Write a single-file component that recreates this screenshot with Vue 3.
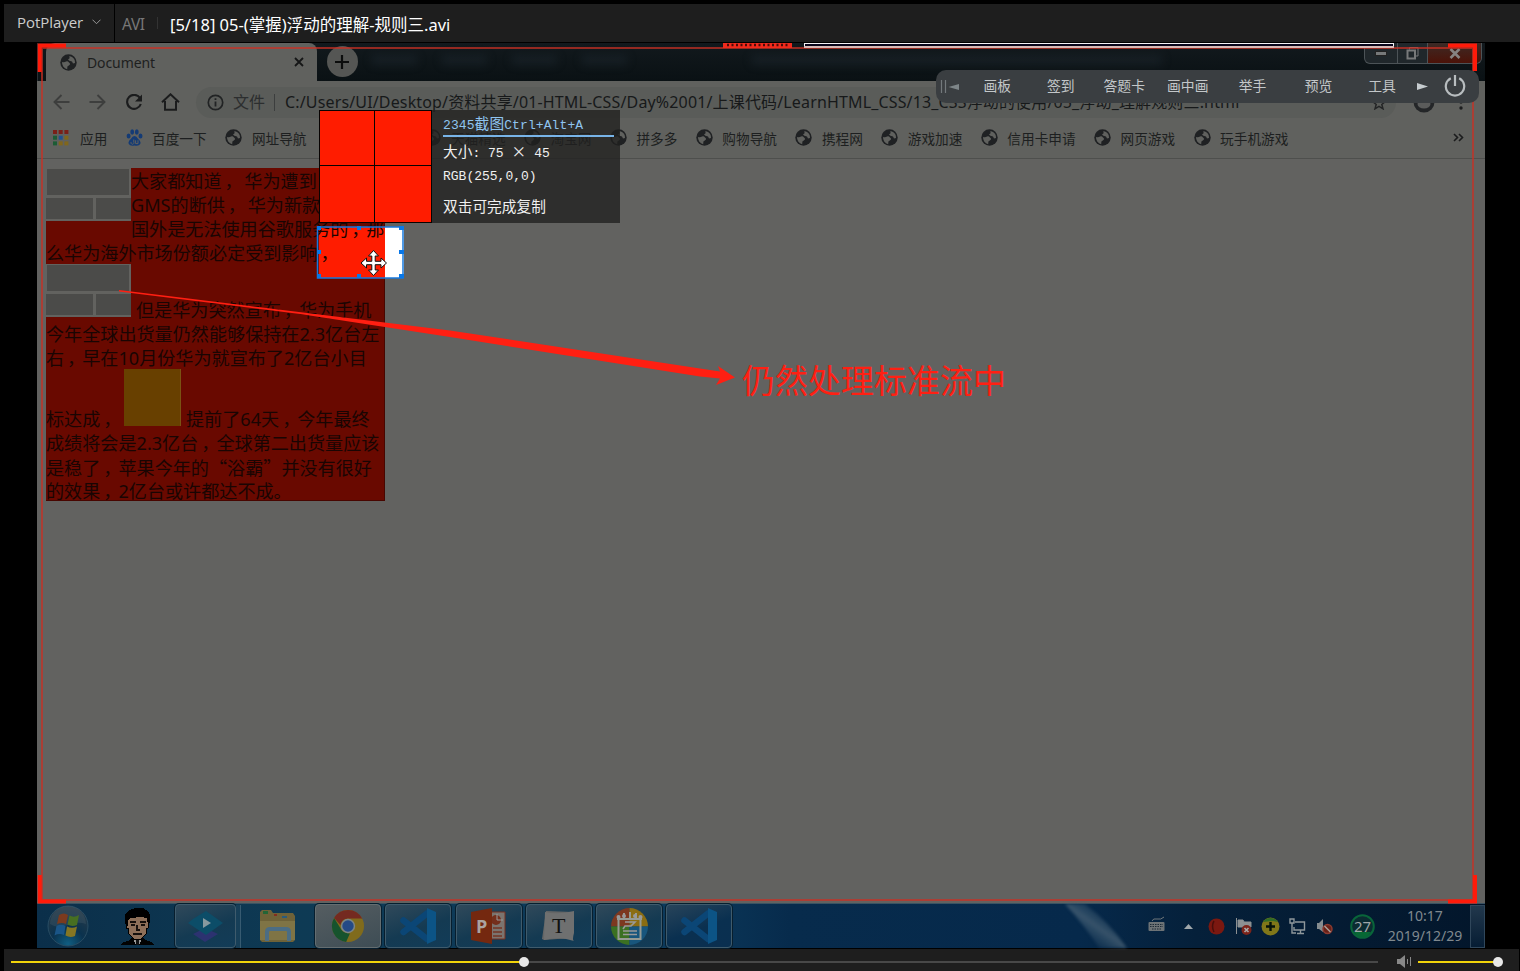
<script setup>
const bookmarks = [
  { t: '网址导航' }, { t: '', n: 4 }, { t: '天猫精选' }, { t: '淘宝网' }, { t: '拼多多' }, { t: '购物导航' },
  { t: '携程网' }, { t: '游戏加速' }, { t: '信用卡申请' }, { t: '网页游戏' }, { t: '玩手机游戏' }
]
const itemWidth = (b) => ({ width: 44.96 + (b.n || b.t.length) * 13.65 + 'px' })
const tools = ['画板', '签到', '答题卡', '画中画', '举手', '预览', '工具']
const dots = ['#7a2018', '#7a2018', '#7a2018', '#1c5c35', '#22508c', '#80661c', '#1c5c35', '#80661c', '#80661c']
const split = (s) => s.split(/([，“”])/)
const kind = (s) => ({ c: s === '，', q: s === '“' || s === '”' })
const top = ['大家都知道， 华为遭到', 'GMS的断供， 华为新款', '国外是无法使用谷歌服务的，那']
const mid = ['今年全球出货量仍然能够保持在2.3亿台左', '右，早在10月份华为就宣布了2亿台小目']
const end = ['成绩将会是2.3亿台，全球第二出货量应该', '是稳了，苹果今年的“浴霸”并没有很好', '的效果，2亿台或许都达不成。']
</script>

<template>
  <div class="app">
    <svg width="0" height="0" class="defs">
      <symbol id="globe" viewBox="0 0 17 17">
        <circle cx="8.5" cy="8.5" r="8.2" fill="#1f2123" />
        <path d="M2 8Q4.500 8.600 6 7.600T9 8.400Q10.600 9.200 9.800 10.800L7.400 12.600L7.200 15.200Q4.800 14.600 3.200 12.400Q1.900 10.400 2 8Z" fill="#60615e" />
        <path d="M9.400 2Q12.400 2.400 14 4.800Q15.200 6.600 15 9L13 9.600L12 7.600L9.400 6.800L8 5.400L9.600 4.200Z" fill="#60615e" />
      </symbol>
      <symbol id="code" viewBox="0 0 36 36">
        <path d="M3.500 12.500L27 31M3.500 24L27 5.500" stroke="#0b4676" stroke-width="6.500" stroke-linecap="round" />
        <path d="M27 0L36 4V32L27 36Z" fill="#0c5486" />
      </symbol>
    </svg>

    <header class="title">
      <div class="brand"><span>PotPlayer</span>
        <svg width="9" height="6" viewBox="0 0 9 6"><path d="M.5 .7L4.5 4.7L8.5 .7" fill="none" stroke="#999" /></svg>
      </div>
      <span class="fmt">AVI</span><i class="sep"></i>
      <span class="file">[5/18] 05-(掌握)浮动的理解-规则三.avi</span>
    </header>

    <main class="video">
      <div class="tabs">
        <div class="tab">
          <svg width="17" height="17"><use href="#globe" /></svg>
          <span>Document</span>
          <svg width="10" height="10" class="x"><path d="M1 1L9 9M9 1L1 9" stroke="#151617" stroke-width="1.8" /></svg>
        </div>
        <div class="plus"><svg width="14" height="14"><path d="M7 0V14M0 7H14" stroke="#0c0d0d" stroke-width="2.2" /></svg></div>
        <div class="ghosts"><i></i><i></i><i></i><i></i><i class="wide"></i></div>
        <div class="win">
          <div><svg width="12" height="5"><rect x=".5" y=".5" width="11" height="4" fill="#77797a" stroke="#222" /></svg></div>
          <div><svg width="13" height="13"><path d="M3.5 2.5V.5H12V9H10" fill="none" stroke="#77797a" /><rect x="1.5" y="3.5" width="7.5" height="8" fill="none" stroke="#77797a" stroke-width="2" /></svg></div>
          <div class="close"><svg width="12" height="11"><path d="M1.5 1L10.5 10M10.5 1L1.5 10" stroke="#858281" stroke-width="2.6" /></svg></div>
        </div>
      </div>

      <div class="bar">
        <svg width="17" height="16" viewBox="0 0 17 16"><path d="M16.5 8H1.5M8.5 1L1.5 8L8.5 15" fill="none" stroke="#3d3e3d" stroke-width="1.9" /></svg>
        <svg width="17" height="16" viewBox="0 0 17 16"><path d="M.5 8H15.5M8.5 1L15.5 8L8.5 15" fill="none" stroke="#3d3e3d" stroke-width="1.9" /></svg>
        <svg width="18" height="17" viewBox="0 0 18 17"><path d="M15 4A7 7 0 1 0 15.8 10" fill="none" stroke="#1b1c1d" stroke-width="2.1" /><path d="M17 .5V7.5H10Z" fill="#1b1c1d" /></svg>
        <svg width="19" height="18" viewBox="0 0 19 18"><path d="M1 9.3L9.5 1.3L18 9.3M4 8V16.8H15V8" fill="none" stroke="#1b1c1d" stroke-width="2" /></svg>
        <div class="pill">
          <svg width="17" height="17"><circle cx="8.5" cy="8.5" r="7.2" fill="none" stroke="#212324" stroke-width="1.7" /><path d="M8.5 7.5V12.5M8.5 4.3V6" stroke="#212324" stroke-width="1.8" /></svg>
          <span class="kind">文件</span><i></i>
          <span class="url">C:/Users/UI/Desktop/资料共享/01-HTML-CSS/Day%2001/上课代码/LearnHTML_CSS/13_CSS浮动的使用/05_浮动_理解规则三.html</span>
          <svg class="star" width="14" height="14" viewBox="0 0 14 14"><path d="M7 1L8.8 5.2L13.2 5.6L9.8 8.4L11 12.8L7 10.4L3 12.8L4.2 8.4L.8 5.6L5.2 5.2Z" fill="none" stroke="#242526" stroke-width="1.5" /></svg>
        </div>
        <svg class="user" width="22" height="22"><circle cx="11" cy="11" r="10.5" fill="#242628" /><ellipse cx="11" cy="13" rx="6.5" ry="4.5" fill="#5b5c5b" /></svg>
        <svg class="kebab" width="4" height="16"><circle cx="2" cy="2" r="1.7" fill="#1c1d1e" /><circle cx="2" cy="8" r="1.7" fill="#1c1d1e" /><circle cx="2" cy="14" r="1.7" fill="#1c1d1e" /></svg>
      </div>

      <div class="marks">
        <svg width="16" height="16" class="apps"><rect v-for="(c, i) in dots" :key="i" :x="(i % 3) * 5.7" :y="Math.floor(i / 3) * 5.7" width="4" height="4" :fill="c" /></svg>
        <span class="w-apps">应用</span>
        <svg width="17" height="17" viewBox="0 0 17 17" class="paw" fill="#143b75"><ellipse cx="2.6" cy="7" rx="2" ry="2.5" /><ellipse cx="6.2" cy="3" rx="1.9" ry="2.7" /><ellipse cx="10.8" cy="3" rx="1.9" ry="2.7" /><ellipse cx="14.5" cy="7" rx="2" ry="2.5" /><path d="M8.5 7Q10.6 7 12 9.8Q15.4 12.3 14.2 15Q12.8 17.4 8.5 16.4Q4.2 17.4 2.8 15Q1.6 12.3 5 9.8Q6.4 7 8.5 7Z" /><path d="M5.2 13a1.5 1.5 0 1 0 2.6 0V10.5M9.6 11.3V14.6H12V11.3" fill="none" stroke="#60615e" /></svg>
        <span class="w-baidu">百度一下</span>
        <div v-for="(b, i) in bookmarks" :key="i" class="mark" :style="itemWidth(b)">
          <svg v-if="b.t" width="17" height="17"><use href="#globe" /></svg><span>{{ b.t }}</span>
        </div>
        <svg class="more" width="11" height="9"><path d="M1 1L4.5 4.5L1 8M6 1L9.5 4.5L6 8" fill="none" stroke="#1b1c1d" stroke-width="1.6" /></svg>
      </div>

      <section class="page">
        <div class="picked"></div>
        <article class="para">
          <div class="float-row">
            <div class="brick"><b></b><div><b></b><b></b></div></div>
            <div><p v-for="l in top" :key="l"><span v-for="(s, i) in split(l)" :key="i" :class="kind(s)">{{ s }}</span></p></div>
          </div>
          <p>么华为海外市场份额必定受到影响<span class="c">，</span></p>
          <div class="inline-row">
            <div class="brick"><b></b><div><b></b><b></b></div></div>
            <p>但是华为突然宣布<span class="c">，</span>华为手机</p>
          </div>
          <p v-for="l in mid" :key="l"><span v-for="(s, i) in split(l)" :key="i" :class="kind(s)">{{ s }}</span></p>
          <div class="gold-row">
            <p>标达成<span class="c">，</span></p><i></i><p>提前了64天<span class="c">，</span>今年最终</p>
          </div>
          <p v-for="l in end" :key="l"><span v-for="(s, i) in split(l)" :key="i" :class="kind(s)">{{ s }}</span></p>
        </article>
      </section>

      <footer class="task">
        <svg class="orb" width="42" height="42" viewBox="0 0 42 42">
          <defs><radialGradient id="orbg" cx=".5" cy=".95" r=".9"><stop offset="0" stop-color="#11658a" /><stop offset=".45" stop-color="#0b334f" /><stop offset="1" stop-color="#2c3c48" /></radialGradient></defs>
          <circle cx="21" cy="21" r="20" fill="url(#orbg)" stroke="#2c5066" />
          <path d="M3 19A18 18 0 0 1 39 19Q30 16 21 20Q10 24 3 19Z" fill="#6d7f8a" opacity=".22" />
          <path d="M12 10Q17 7 21 10L19 19Q15 17 10 19Z" fill="#8b3c18" /><path d="M22.500 10.500Q27 13 32 10L30 20Q25 22 20.500 19.500Z" fill="#50781c" />
          <path d="M9.500 21Q14 18.500 18.500 21L17 30Q12 28 7.500 30.500Z" fill="#1d5b90" /><path d="M20 21.500Q25 24 30 21.500L28 31Q23 33 18.500 30.500Z" fill="#96801e" />
        </svg>
        <svg class="face" width="33" height="37" viewBox="0 0 33 37" shape-rendering="crispEdges">
          <path d="M0 36L3 34L9 32L12 28H21L24 32L30 34L33 36V37H0Z" fill="#020202" />
          <path d="M12 29H21L19 36H14Z" fill="#999" /><path d="M15 31H18V37H15Z" fill="#111" />
          <path d="M5 14L7 8H26L28 14L27 20H26L25 26L20 31H13L8 26L7 20H5Z" fill="#8e7059" stroke="#000" />
          <path d="M4 14V6L8 2L14 0H22L27 3L29 7V14L27 18L26 10L20 9L9 10L7 12V18H5Z" fill="#000" />
          <path d="M9 14H15M19 14H25M10 17H14M20 17H24M16 17V22H19M12 26H21" fill="none" stroke="#16100c" stroke-width="1.2" />
        </svg>
        <div class="btn player"><svg width="35" height="31" viewBox="0 0 35 31"><path d="M5 23L17 17L30 23L17 31Z" fill="#2c3270" /><path d="M18 0L35 12L18 24L0 12L5 8Z" fill="#0c4d68" /><path d="M15 7L23 12L15 17Z" fill="#87999f" /></svg></div>
        <i class="stack"></i>
        <svg class="folder" width="37" height="33" viewBox="0 0 37 33">
          <path d="M1 2L3 0H12L14 3H34L36 6V30L34 32H3L1 30Z" fill="#6e6238" /><path d="M4 1H9V4H4Z" fill="#236536" /><path d="M15 4H18V6H15Z" fill="#832d20" /><path d="M23 6H28V8H23Z" fill="#285b7c" />
          <path d="M1 11H36V30H1Z" fill="#7f7445" /><path d="M8 31V22Q8 19 11 19H27Q30 19 30 22V31" fill="none" stroke="#4b6d84" stroke-width="4" />
        </svg>
        <div class="btn lit"><svg width="34" height="34" viewBox="0 0 36 36"><circle cx="18" cy="18" r="17" fill="#806b1c" /><path d="M3.300 9.500L11 22Q14 26 20 26L16 35A17 17 0 0 1 3.300 9.500Z" fill="#16532d" /><path d="M3.300 9.500A17 17 0 0 1 33 10H18A8 8 0 0 0 10 17L3.300 9.500Z" fill="#742a20" /><circle cx="18" cy="18" r="7.600" fill="#7b8587" /><circle cx="18" cy="18" r="6" fill="#244a86" /></svg></div>
        <div class="btn"><svg width="36" height="36"><use href="#code" /></svg></div>
        <div class="btn"><svg width="36" height="36" viewBox="0 0 36 36"><path d="M18 4H34V31H18Z" fill="#7b746f" stroke="#793020" /><path d="M22 20H31M22 24H31M22 28H31" stroke="#743525" stroke-width="1.600" /><circle cx="25" cy="12" r="5" fill="#742f1c" /><path d="M26 6V12H32" fill="none" stroke="#999" /><path d="M0 4L21 0V36L0 32Z" fill="#74280f" /><text x="5" y="25" class="ppt">P</text></svg></div>
        <div class="btn"><svg width="34" height="34" viewBox="0 0 34 34"><path d="M4 2L31 3L29 29L2 31L0 30Z" fill="#656666" /><path d="M3 3Q16 6 32 2V24Q30 31 32 32Q18 27 2 31Z" fill="#6f7070" /><text x="10" y="24" class="tt">T</text></svg></div>
        <div class="btn"><svg width="37" height="37" viewBox="0 0 37 37"><path d="M18.500 18.500V0A18.500 18.500 0 0 0 0 18.500Z" fill="#7d3820" /><path d="M18.500 18.500H37A18.500 18.500 0 0 0 18.500 0Z" fill="#8b6d12" /><path d="M18.500 18.500H0A18.500 18.500 0 0 0 18.500 37Z" fill="#3b7022" /><path d="M18.500 18.500V37A18.500 18.500 0 0 0 37 18.500Z" fill="#18567d" /><path d="M7.500 9V31H29.500V9M6 11H31M13 5V11M19 4V11M25 5V11" fill="none" stroke="#969b94" stroke-width="2" /><circle cx="7.500" cy="9" r="2" fill="#999" /><circle cx="13" cy="8" r="2" fill="#999" /><circle cx="24" cy="8" r="2" fill="#999" /><circle cx="29.500" cy="9" r="2" fill="#999" /><path d="M14 14H24L20 18H14L12 21M12 23H26M12 26.500H26" fill="none" stroke="#999" stroke-width="1.600" /></svg></div>
        <div class="btn last"><svg width="36" height="36"><use href="#code" /></svg></div>
        <svg class="beam" width="70" height="44"><defs><linearGradient id="bg1" x1="0" y1="1" x2="1" y2="0"><stop offset=".2" stop-color="#365873" stop-opacity="0" /><stop offset=".5" stop-color="#4c6578" stop-opacity=".7" /><stop offset=".8" stop-color="#365873" stop-opacity="0" /></linearGradient></defs><path d="M0 0H20Q44 18 62 44H34Q20 22 0 0Z" fill="url(#bg1)" /></svg>
        <div class="tray">
          <svg class="t1" width="17" height="16"><path d="M4 5Q5 2 9 3T16 1" fill="none" stroke="#6f777b" /><rect x=".500" y="6" width="16" height="9" rx="1" fill="#6d7376" /><path d="M2 8.500H15M2 10.500H15M4 13H13" stroke="#1d2b36" stroke-dasharray="1.500 1" /></svg>
          <svg class="t2" width="9" height="5"><path d="M0 5L4.500 0L9 5Z" fill="#a0a7aa" /></svg>
          <svg class="t3" width="17" height="17"><circle cx="8.500" cy="8.500" r="8" fill="#7b1810" /><path d="M6 3Q3 8 6 14" fill="none" stroke="#4a0e0a" stroke-width="1.500" /></svg>
          <svg class="t4" width="17" height="17"><path d="M1.500 0V16M3 2H8L9 4H16V9H3Z" fill="#8c9092" stroke="#8c9092" /><circle cx="11.500" cy="12" r="5" fill="#7c2319" /><path d="M9.500 10L13.500 14M13.500 10L9.500 14" stroke="#aaa" stroke-width="1.600" /></svg>
          <svg class="t5" width="19" height="19"><circle cx="9.500" cy="9.500" r="9" fill="#817719" /><path d="M2 5A9 9 0 0 1 17 5L12 4Z" fill="#326c25" /><path d="M9.500 5V14M5 9.500H14" stroke="#06130a" stroke-width="2.400" /></svg>
          <svg class="t6" width="17" height="17"><path d="M6 4H15.500V12H5V9M8 15.500H15M11.500 12V15M1 1H5V5H1ZM3 5V15H7" fill="none" stroke="#8e979b" stroke-width="1.400" /></svg>
          <svg class="t7" width="17" height="17"><path d="M1 5H3L7 1V14L3 11H1Z" fill="#858c8f" /><circle cx="11.500" cy="11" r="4.500" fill="#692016" stroke="#8b3b31" stroke-width="1.500" /><path d="M8.500 8L14.500 14" stroke="#aaa09b" stroke-width="1.500" /></svg>
          <svg class="t8" width="25" height="25"><circle cx="12.500" cy="12.500" r="11.300" fill="#0b2b31" /><path d="M4 18H21Q17 24 12.500 24T4 18Z" fill="#076834" /><circle cx="12.500" cy="12.500" r="11.300" fill="none" stroke="#09653a" stroke-width="2" /><text x="12.500" y="17.500" class="num">27</text></svg>
          <div class="clock"><span>10:17</span><span>2019/12/29</span></div>
          <i class="peek"></i>
        </div>
      </footer>
    </main>

    <footer class="seek">
      <div class="track"><i></i><b></b></div>
      <svg width="15" height="13"><path d="M0 4H3L8 0V13L3 9H0Z" fill="#888" /><path d="M10.500 4V9" stroke="#888" /><path d="M13.500 2V11" stroke="#888" /></svg>
      <div class="vol"><i></i><b></b></div>
    </footer>

    <div class="rec"></div>
    <svg class="ink" width="1520" height="971">
      <path d="M66 45.500H39.700V72M1448 45.500H1475V71M39.700 875V901.500H66M1448 901.500H1475V875" fill="none" stroke="#ff1b0a" stroke-width="4" />
      <rect x="723" y="43" width="69" height="5" fill="#f02a1c" /><path d="M727 45H789" stroke="#4c0a06" stroke-width="2.400" stroke-dasharray="2 2.500" />
      <rect x="804" y="43" width="590" height="5" fill="#f3f1f4" /><rect x="805" y="44" width="588" height="2" fill="#08051a" /><rect x="804" y="46" width="590" height="2" fill="#d7b9b5" />
      <path d="M119 290L450 330.500L700 368.500L720 371.500L718 366L735 377.500L716 385L720 378.500L700 376.500L450 337L300 314L119 291.500Z" fill="#ff1f12" />
    </svg>
    <div class="note">仍然处理标准流中</div>

    <nav class="float">
      <svg class="grip" width="20" height="14"><path d="M1.500 0V13M5.500 0V13" stroke="#73797c" stroke-width="1.200" /><path d="M19 4V10L8.500 7Z" fill="#7d8588" /></svg>
      <span v-for="t in tools" :key="t">{{ t }}</span>
      <svg class="next" width="11" height="7"><path d="M0 0V7L11 3.500Z" fill="#c6cccf" /></svg>
      <svg class="power" width="22" height="22"><path d="M6.800 3.200A9.200 9.200 0 1 0 15.200 3.200M11 0V11" fill="none" stroke="#b8bdbf" stroke-width="2.200" /></svg>
    </nav>

    <aside class="pop">
      <svg width="113" height="113"><rect width="113" height="113" fill="#080302" /><path d="M1 1H55V55H1ZM56 1H112V55H56ZM1 56H55V112H1ZM56 56H112V112H56Z" fill="#ff1c00" /></svg>
      <div class="info">
        <div class="key">2345<em>截图</em>Ctrl+Alt+A</div>
        <div class="size"><em>大小</em>: 75 <em class="times">×</em> 45</div>
        <div class="rgb">RGB(255,0,0)</div>
        <div class="tip"><em>双击可完成复制</em></div>
      </div>
    </aside>
    <svg class="sel" width="90" height="58">
      <rect x="1.500" y="3" width="85.500" height="51" fill="none" stroke="#1778dc" stroke-width="1.500" />
      <path d="M1 2H5V6H1ZM41 2H45V6H41ZM83 2H88V6H83ZM1 26H5V30H1ZM83 26H88V30H83ZM1 50H5V54H1ZM41 50H45V54H41ZM83 50H88V54H83Z" fill="#0877e8" />
      <path transform="translate(1 .5)" d="M56.500 26L61.500 31.500H58.200V36.800H64V33.500L69.500 38.500L64 43.500V40.200H58.200V45.500H61.500L56.500 51L51.500 45.500H54.800V40.200H49.500V43.500L44 38.500L49.500 33.500V36.800H54.800V31.500H51.500Z" fill="#fff" stroke="#111" />
    </svg>
  </div>
</template>

<style>
html, body { margin: 0; background: #000; overflow: hidden; }
</style>

<style scoped>
* { box-sizing: border-box; }
svg { display: block; flex: none; }
.defs { position: absolute; }
.app { position: relative; width: 1520px; height: 971px; background: #000; padding: 4px 0 0; display: flex; flex-direction: column; font-family: "Noto Sans", "Noto Sans CJK SC", sans-serif; white-space: nowrap; overflow: hidden; }
.title { margin-left: 4px; height: 38px; flex: none; background: #1e1e1e; display: flex; align-items: center; }
.brand { width: 111px; height: 38px; border-right: 1px solid #000; padding: 0 0 2px 13px; display: flex; align-items: center; color: #ccc; font: 500 15px "Open Sans", sans-serif; }
.brand span { width: 75px; letter-spacing: -.05px; }
.fmt { color: #777; font-size: 15.500px; width: 35px; margin-left: 7px; padding-top: 1px; letter-spacing: -.4px; }
.sep { width: 1px; height: 12px; background: #333; margin-right: 12px; }
.file { color: #fff; font-size: 16.500px; letter-spacing: 0; padding-top: 1px; }

.video { margin: 1px 0 0 37px; width: 1448px; height: 905px; flex: none; background: #626260; display: flex; flex-direction: column; }
.tabs { height: 38px; flex: none; background: linear-gradient(#12191d, #0a1114); display: flex; padding-left: 8px; position: relative; border-left: 1px solid #283034; }
.tab { width: 271px; height: 38px; background: #60615e; border-radius: 9px 8px 0 0; display: flex; align-items: center; padding: 0 13px 0 14px; color: #1e1f20; font-size: 14px; }
.tab span { margin-left: 10px; letter-spacing: -.1px; }
.x { margin-left: auto; }
.plus { width: 31px; height: 31px; margin: 3px 0 0 9.500px; border-radius: 50%; background: #555654; display: flex; align-items: center; justify-content: center; }
.ghosts { display: flex; gap: 25px; padding: 12px 0 0 14px; filter: blur(4px); }
.ghosts i { width: 45px; height: 10px; background: #26303a; opacity: .35; }
.ghosts .wide { width: 410px; margin-left: 100px; }
.win { position: absolute; right: 3px; top: 0; width: 118px; height: 21px; border: 1px solid #4c5357; border-top: 0; border-radius: 0 0 6px 6px; display: flex; background: #20272b; overflow: hidden; }
.win div { width: 33px; display: flex; justify-content: center; align-items: center; border-right: 1px solid #4c5357; }
.win div + div { width: 30px; }
.win .close { flex: 1; border: 0; background: linear-gradient(#3c2a26, #4c1208); }
.bar { height: 39px; flex: none; background: #60615e; display: flex; align-items: center; padding: 3px 0 0 16px; }
.bar > svg { margin-right: 19px; }
.bar > svg:nth-child(3) { margin-right: 18px; }
.bar > svg:nth-child(4) { margin-right: 16px; }
.pill { width: 1200px; height: 31px; border-radius: 16px; background: #5a5c59; display: flex; align-items: center; padding-left: 11px; position: relative; }
.kind { font-size: 16px; color: #2c2e2f; margin: -2px 0 0 9px; width: 41px; }
.pill i { width: 1px; height: 17px; background: #3c3e3e; margin-right: 10px; }
.url { color: #17191a; font-size: 16px; letter-spacing: .15px; margin-top: -3px; }
.star { position: absolute; right: 10px; top: 9px; }
.bar .user { margin: 0 24px 0 17px; }
.bar .kebab { margin: 0; }
.marks { height: 39px; flex: none; background: #60615e; border-bottom: 1px solid #4e4f4d; display: flex; align-items: center; padding: 0 21px 3px 16px; color: #1d1f20; font-size: 13.650px; }
.w-apps { margin-left: 11px; width: 46px; }
.w-baidu { margin-left: 9px; width: 73.400px; }
.mark { display: flex; align-items: center; gap: 9.500px; flex: none; }
.more { margin-left: auto; }

.page { height: 744px; flex: none; padding: 9px 0 0 9px; position: relative; isolation: isolate; }
.para { width: 339px; height: 333px; background: #690900; color: #190503; font-size: 18.100px; border-right: 1px solid #480600; border-bottom: 1px solid #480600; }
.para p { margin: 0; height: 24px; line-height: 24px; position: relative; top: 0; z-index: 2; letter-spacing: .01px; }
.c { position: relative; left: 3px; }
.q { font-family: "Noto Sans CJK SC", sans-serif; }
.float-row { display: flex; height: 73px; }
.float-row p { top: 1px; }
.brick { width: 85px; height: 53px; background: #62625f; padding: 1px 0 0 1px; flex: none; }
.brick b { display: block; background: #4b4b49; height: 26px; width: 82px; }
.brick div { display: flex; gap: 2px; padding-top: 3px; }
.brick div b { width: 47px; height: 21px; margin-left: -1px; }
.brick div b + b { width: 35px; margin-left: 1px; }
.inline-row { display: flex; height: 57px; margin-top: -1px; gap: 5px; align-items: flex-end; }
.inline-row .brick { align-self: flex-start; }
.inline-row p { top: 1px; }
.inline-row ~ p { top: 1px; }
.gold-row { display: flex; height: 61px; align-items: flex-end; margin-top: 1px; }
.gold-row i { width: 57px; height: 57px; background: #684000; border-right: 1px solid #7a5213; margin: 0 5px 5px 5px; }
.gold-row p:first-child { width: 73px; }
.gold-row ~ p { top: 0; }
.picked { position: absolute; z-index: 1; left: 282px; top: 68px; width: 85px; height: 51px; background: linear-gradient(90deg, #ff1c00 66px, #fff 66px); }

.task { height: 45px; flex: none; border-top: 1px solid #3b5262; background: linear-gradient(90deg, #0b2f4a, #0e3a54 18%, #0c3a5c 44%, #072b4c 52%, #06294b 72%, #05203a 80%, #03162b); display: flex; align-items: center; position: relative; }
.orb { margin-left: 9.500px; opacity: .88; }
.face { margin-left: 32.500px; }
.btn { width: 66px; height: 44px; border: 1px solid #3f5b6c; border-radius: 4px; margin-right: 4.300px; background: linear-gradient(160deg, #30495a, #143a52 55%, #123c58); display: flex; align-items: center; justify-content: center; box-shadow: 0 0 0 1px #071e2e; flex: none; }
.player { width: 61px; margin: 0 0 0 21px; }
.lit { background: linear-gradient(160deg, #555d61, #3e4d55); border-color: #646d70; }
.last { background: linear-gradient(160deg, #28445a, #0a3050 55%, #0a2f50); }
.stack { width: 5px; height: 43px; border-right: 1px solid #375b71; background: #173f58; }
.folder { margin: 0 19px 0 18px; }
.ppt { font: bold 18px "Open Sans", sans-serif; fill: #aaa3a0; }
.tt { font: 22px "Liberation Serif", serif; fill: #111; }
.num { font: 15px "Noto Sans", sans-serif; fill: #a0a6a8; text-anchor: middle; }
.beam { position: absolute; left: 1028px; top: 0; filter: blur(1.500px); }
.tray { margin-left: auto; display: flex; align-items: center; height: 44px; }
.t2 { margin-left: 19px; } .t3 { margin-left: 15px; } .t4 { margin-left: 10px; } .t5 { margin-left: 9px; } .t6 { margin-left: 9px; } .t7 { margin-left: 10px; } .t8 { margin-left: 17px; }
.t1 { margin-top: -5px; }
.clock { display: flex; flex-direction: column; align-items: center; width: 76px; margin-left: 12px; color: #80898f; font-size: 14px; line-height: 20px; letter-spacing: 0; }
.peek { width: 15px; height: 43px; margin-left: 7px; border: 1px solid #30475b; background: linear-gradient(#22384c, #061d34); }

.seek { margin: 1px 0 0 4px; width: 1515px; height: 22px; flex: none; background: #1e1e1e; display: flex; align-items: center; padding: 3px 0 0 7px; }
.track { width: 1367px; height: 2px; background: linear-gradient(90deg, #f2d40a 513px, #484848 513px); margin-right: 19px; position: relative; }
.track b, .vol b { position: absolute; width: 10px; height: 10px; border-radius: 50%; background: #e8e8e8; top: -4px; left: 508px; }
.vol { width: 78px; height: 2px; background: #f2d40a; margin-left: 6px; position: relative; }
.vol b { left: 75px; }

.rec { position: absolute; left: 41px; top: 47px; width: 1433px; height: 854px; border: 2px solid rgba(200, 48, 36, .72); }
.ink { position: absolute; left: 0; top: 0; }
.note { position: absolute; left: 742px; top: 357px; color: #ff2013; font-size: 33px; line-height: 48px; }
.float { position: absolute; left: 936px; top: 70px; width: 543px; height: 33px; border-radius: 10px; background: #3a3e41; color: #c3c7c9; font-size: 13.800px; display: flex; align-items: center; }
.grip { margin: 0 5.500px 0 4px; }
.float span { width: 63.500px; text-align: center; margin-top: -3px; }
.float .next { margin-left: 4px; }
.power { margin: -2px 0 0 16px; }
.float span:nth-of-type(n + 5) { width: 66px; }
.float span:nth-of-type(7) { width: 61px; }
.pop { position: absolute; left: 319px; top: 110px; width: 301px; height: 113px; background: rgba(32, 32, 31, .78); display: flex; }
.info { padding: 5px 0 0 11px; color: #f0f0f0; font: 13px "Liberation Mono", "Noto Sans CJK SC", monospace; }
.info em { font: 14.700px "Noto Sans CJK SC", sans-serif; line-height: 20px; }
.key { width: 171px; height: 22px; line-height: 16px; color: #8fc4f0; border-bottom: 2px solid #78b4e8; letter-spacing: .1px; }
.info .key em { line-height: 16px; }
.info .size { height: 28px; line-height: 28px; margin-top: 3px; }
.info .times { display: inline-block; width: 15px; text-align: center; }
.info .rgb { height: 18px; line-height: 18px; }
.tip { margin-top: 10px; line-height: 22px; }
.sel { position: absolute; left: 316px; top: 224px; }
</style>
